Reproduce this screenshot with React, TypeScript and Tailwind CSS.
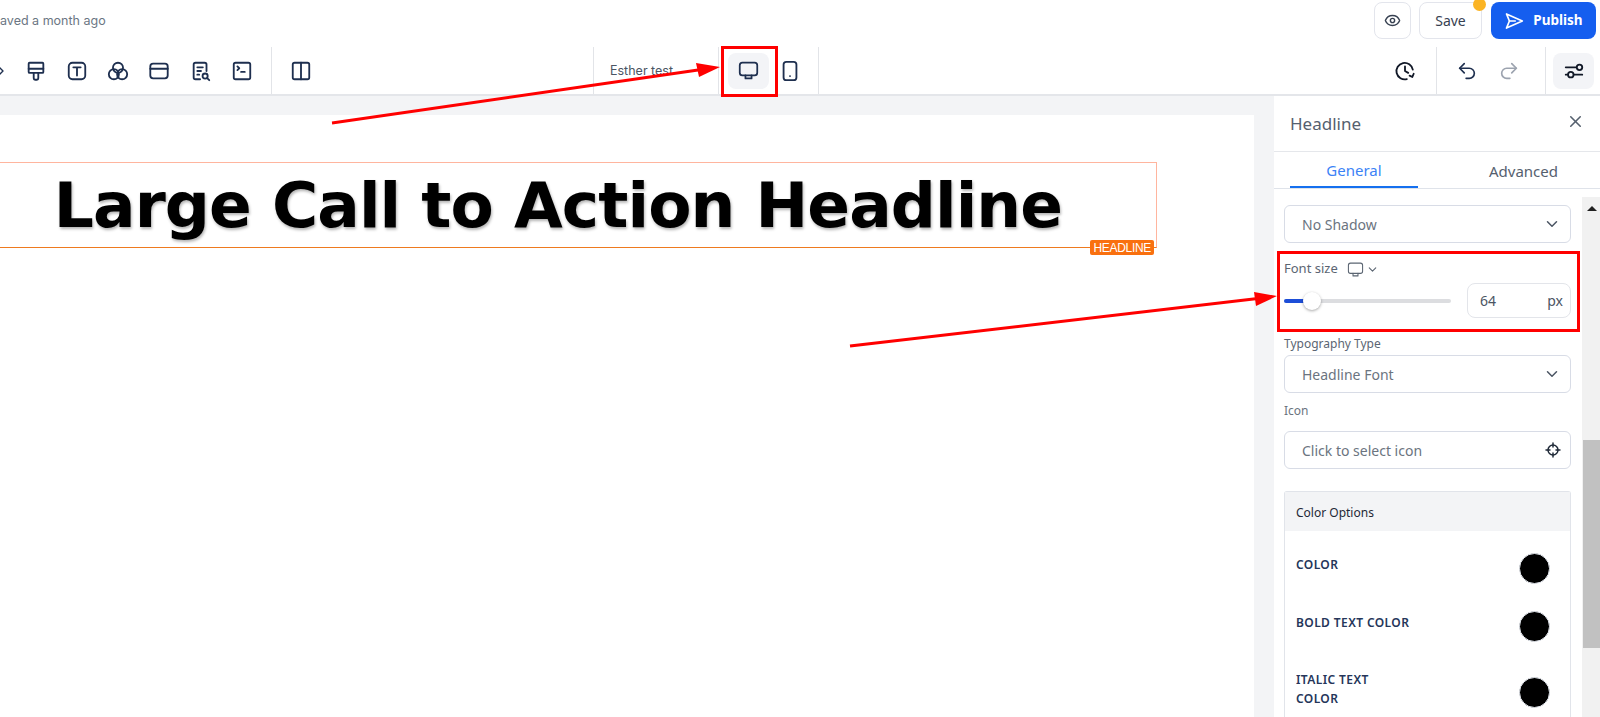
import React from "react";
import { Eye, Undo2, Redo2, X, ChevronDown, Columns2, SquareTerminal, ChevronRight } from "lucide-react";

const ink = "#1e2f4f";

function Svg({ children, size = 22, color = ink, sw = 2, className }: { children: React.ReactNode; size?: number; color?: string; sw?: number; className?: string }) {
  return (
    <svg className={className} width={size} height={size} viewBox="0 0 24 24" fill="none" stroke={color} strokeWidth={sw} strokeLinecap="round" strokeLinejoin="round">
      {children}
    </svg>
  );
}

const Brush = () => (
  <Svg>
    <path d="M5 3h14a1 1 0 0 1 1 1v9a1 1 0 0 1-1 1H5a1 1 0 0 1-1-1V4a1 1 0 0 1 1-1z" />
    <path d="M4 9.5h16" />
    <path d="M9.5 14v6a1.5 1.5 0 0 0 1.5 1.5h2a1.5 1.5 0 0 0 1.5-1.5v-6" />
  </Svg>
);
const TextBox = () => (
  <Svg>
    <rect x="3" y="3" width="18" height="18" rx="4" />
    <path d="M8 8h8M12 8v9" />
  </Svg>
);
const Circles = () => (
  <Svg>
    <circle cx="12" cy="8.5" r="5.5" />
    <circle cx="7.5" cy="15.5" r="5.5" />
    <circle cx="16.5" cy="15.5" r="5.5" />
  </Svg>
);
const WindowIcon = () => (
  <Svg>
    <rect x="2.5" y="4" width="19" height="16" rx="3" />
    <path d="M2.5 9.5h19" />
  </Svg>
);
const FileSearch = () => (
  <Svg>
    <path d="M11 21H6a2 2 0 0 1-2-2V5a2 2 0 0 1 2-2h10a2 2 0 0 1 2 2v7" />
    <path d="M8 8h6M8 12h4M8 16h2" />
    <circle cx="16.5" cy="17.5" r="2.8" />
    <path d="M19 20l2 2" />
  </Svg>
);
const HistoryIcon = () => (
  <Svg color="#111827">
    <path d="M20.5 10.5A9 9 0 1 0 14 20.8" />
    <path d="M12 7v5l3.5 2" />
    <path d="M21.5 15l-1.5 3.5-3-1.5" />
  </Svg>
);
const Sliders = () => (
  <Svg color="#111827">
    <path d="M3 8h11M3 16h2M12 16h9" />
    <circle cx="18" cy="8" r="3" />
    <circle cx="8.5" cy="16" r="3" />
  </Svg>
);
const Crosshair = () => (
  <Svg size={16} color="#1f2937" sw={2.2}>
    <circle cx="12" cy="12" r="7.5" />
    <path d="M12 1.5v6M12 16.5v6M1.5 12h6M16.5 12h6" />
  </Svg>
);
const MonitorIcon = ({ size = 21, color = ink, sw = 2, className }: { size?: number; color?: string; sw?: number; className?: string }) => (
  <Svg size={size} color={color} sw={sw} className={className}>
    <rect x="2" y="3" width="20" height="14.5" rx="3" />
    <path d="M8.5 17.5V21h7v-3.5" />
  </Svg>
);
const Phone = () => (
  <Svg className="ml-[10px]">
    <rect x="5" y="2" width="14" height="20" rx="3" />
    <path d="M12 17.5h.01" />
  </Svg>
);
const Plane = () => (
  <Svg size={20} color="white" sw={2}>
    <path d="M3 3.5L22 12 3 20.5 6.5 12z" />
    <path d="M6.5 12h7" />
  </Svg>
);

function Field({ text, icon }: { text: string; icon: React.ReactNode }) {
  return (
    <div className="flex h-[38px] items-center justify-between rounded-md border border-[#d8dce6] bg-white pl-[17px] pr-[9px] text-[14px] text-[#6b7480]">
      <span>{text}</span>
      {icon}
    </div>
  );
}

function ColorRow({ label, h, pt, circle }: { label: React.ReactNode; h: string; pt: string; circle: string }) {
  return (
    <div className={`flex shrink-0 items-start justify-between pl-[11px] pr-[20px] ${h} ${pt}`}>
      <div className="text-[12px] font-semibold leading-[19px] tracking-[0.4px] text-[#25365a]">{label}</div>
      <div className={`h-[31px] w-[31px] rounded-full border border-[#dfe3ea] bg-black ${circle}`} />
    </div>
  );
}

export default function App() {
  return (
    <div className="relative flex h-[717px] w-[1600px] flex-col overflow-hidden bg-white font-['Inter',sans-serif]">
      {/* top bar */}
      <div className="flex h-[47px] shrink-0 items-start justify-between pr-[4px] pt-[2px]">
        <div className="ml-[-8px] mt-[11px] text-[12.5px] leading-[16px] text-[#6b7683]">Saved a month ago</div>
        <div className="flex items-start">
          <div className="flex h-[37px] w-[37px] items-center justify-center rounded-lg border border-[#e3e5ec]">
            <Eye size={17} color="#374151" />
          </div>
          <div className="relative ml-[8px] flex h-[37px] w-[63px] items-center justify-center rounded-lg border border-[#e3e5ec] font-['Noto_Sans',sans-serif] text-[14px] text-[#374151]">
            Save
            <span className="absolute right-[-5px] top-[-5px] h-[13px] w-[13px] rounded-full bg-[#fbb424]" />
          </div>
          <div className="ml-[9px] flex h-[37px] w-[105px] items-center justify-center gap-[9px] rounded-lg bg-[#155eef] font-['Noto_Sans',sans-serif] text-[13.5px] font-bold text-white">
            <Plane />
            Publish
          </div>
        </div>
      </div>

      {/* toolbar */}
      <div className="flex h-[49px] shrink-0 items-stretch border-b-2 border-[#e4e6ea]">
        <div className="flex w-[272px] shrink-0 items-center border-r border-[#e2e4e8]">
          <ChevronRight size={16} color={ink} strokeWidth={2} className="ml-[-7px]" />
          <div className="ml-[15.5px] flex items-center gap-[19.3px]">
            <Brush />
            <TextBox />
            <Circles />
            <WindowIcon />
            <FileSearch />
            <SquareTerminal size={22} color={ink} strokeWidth={2} />
          </div>
        </div>
        <div className="flex w-[321px] shrink-0 items-center pl-[18px]">
          <Columns2 size={22} color={ink} strokeWidth={2} />
        </div>
        <div className="flex w-[126px] shrink-0 items-center border-x border-[#e2e4e8] pl-[16px] pt-[1px] text-[12.5px] text-[#4b5563]">Esther test</div>
        <div className="flex w-[100px] shrink-0 items-center border-r border-[#e2e4e8] pl-[9px]">
          <div className="flex h-[36px] w-[41px] items-center justify-center rounded-lg bg-[#f3f4f7]">
            <MonitorIcon />
          </div>
          <Phone />
        </div>
        <div className="flex flex-1 items-center justify-end border-r border-[#e2e4e8] pr-[20px]">
          <HistoryIcon />
        </div>
        <div className="flex w-[109px] shrink-0 items-center border-r border-[#e2e4e8] pl-[19px]">
          <Undo2 size={22} color={ink} strokeWidth={1.8} />
          <Redo2 size={22} color="#9ca3af" strokeWidth={1.8} className="ml-[20px]" />
        </div>
        <div className="flex w-[54px] shrink-0 items-center justify-center pl-[1px]">
          <div className="flex h-[36px] w-[41px] items-center justify-center rounded-lg bg-[#f3f4f7]">
            <Sliders />
          </div>
        </div>
      </div>

      {/* main */}
      <div className="flex min-h-0 flex-1 bg-[#f3f4f6]">
        <div className="mt-[19px] w-[1254px] shrink-0 bg-white pt-[47px]">
          <div className="relative ml-[-41px] flex h-[86px] w-[1198px] items-center justify-center border border-[#ffb59e] border-b-[#ee7a1f]">
            <span className="font-['DejaVu_Sans',sans-serif] text-[63px] font-bold leading-none tracking-[-0.9px] text-black [text-shadow:1px_2px_3px_rgba(0,0,0,0.3)]">
              Large Call to Action Headline
            </span>
            <span className="absolute bottom-[-8px] right-[2px] flex h-[15px] items-center rounded-[2px] bg-[#f9700f] px-[3px] font-['Liberation_Sans',sans-serif] text-[12px] tracking-[-0.3px] text-white">
              HEADLINE
            </span>
          </div>
        </div>

        <div className="ml-[20px] flex min-w-0 flex-1 flex-col bg-white font-['Noto_Sans',sans-serif]">
          <div className="flex h-[56px] shrink-0 items-center justify-between border-b border-[#e5e7eb] pl-[16px] pr-[15px]">
            <span className="text-[17px] text-[#55606e]">Headline</span>
            <X size={19} color="#55606e" className="mt-[-4px]" />
          </div>
          <div className="flex h-[37px] shrink-0 border-b border-[#dfe3ea] text-[15px]">
            <div className="ml-[16px] flex w-[128px] items-center justify-center border-b-2 border-[#1570ef] pt-[3px] text-[#3b82f6]">General</div>
            <div className="flex flex-1 items-center justify-end pr-[42px] pt-[2px] text-[#55606e]">Advanced</div>
          </div>
          <div className="flex min-h-0 flex-1 overflow-hidden pt-[8px]">
            <div className="min-w-0 flex-1 pl-[10px] pr-[11px] pt-[8px]">
              <Field text="No Shadow" icon={<ChevronDown size={18} color="#4b5563" />} />
              <div className="mt-[17px] flex h-[18px] items-center text-[13px] text-[#5b6572]">
                Font size
                <MonitorIcon size={17} color="#5b6572" sw={1.5} className="ml-[9px]" />
                <ChevronDown size={13} color="#5b6572" className="ml-[2px]" />
              </div>
              <div className="mt-[5px] flex h-[35px] items-center justify-between">
                <div className="relative h-[4px] w-[167px] rounded bg-[#dcdde0]">
                  <div className="h-full w-[20px] rounded-l bg-[#1d4ed8]" />
                  <div className="absolute left-[19px] top-[-7px] h-[18px] w-[18px] rounded-full bg-white shadow-[0_1px_3px_rgba(0,0,0,0.35)]" />
                </div>
                <div className="flex h-[35px] w-[104px] items-center justify-between rounded-lg border border-[#e3e5ea] pl-[12px] pr-[7px] text-[14px] text-[#4b5563]">
                  <span>64</span>
                  <span>px</span>
                </div>
              </div>
              <div className="mt-[17px] text-[12px] leading-[17px] text-[#5b6572]">Typography Type</div>
              <div className="mt-[3px]">
                <Field text="Headline Font" icon={<ChevronDown size={18} color="#4b5563" />} />
              </div>
              <div className="mt-[9px] text-[12px] leading-[17px] text-[#6b7480]">Icon</div>
              <div className="mt-[12px]">
                <Field text="Click to select icon" icon={<Crosshair />} />
              </div>
              <div className="mt-[22px] rounded-t-[3px] border border-b-0 border-[#e1e4ea]">
                <div className="flex h-[39px] items-center bg-[#f3f4f6] pl-[11px] pt-[3px] text-[12px] text-[#1f2937]">Color Options</div>
                <ColorRow label="COLOR" h="h-[57px]" pt="pt-[24px]" circle="mt-[-2px]" />
                <ColorRow label="BOLD TEXT COLOR" h="h-[58px]" pt="pt-[25px]" circle="mt-[-2px]" />
                <ColorRow
                  label={
                    <>
                      ITALIC TEXT
                      <br />
                      COLOR
                    </>
                  }
                  h="h-[120px]"
                  pt="pt-[24px]"
                  circle="mt-[7px]"
                />
              </div>
            </div>
            {/* scrollbar */}
            <div className="relative w-[18px] shrink-0 bg-[#f1f1f1]">
              <div className="absolute left-[5px] top-[9px] h-0 w-0 border-x-[5px] border-b-[5px] border-x-transparent border-b-[#202020]" />
              <div className="absolute left-[1px] right-0 top-[243px] h-[208px] bg-[#c1c1c1]" />
            </div>
          </div>
        </div>
      </div>

      {/* annotations */}
      <div className="pointer-events-none absolute left-[721px] top-[46px] h-[51px] w-[57px] border-[3px] border-[#ff0000]" />
      <div className="pointer-events-none absolute left-[1277px] top-[251px] h-[81px] w-[303px] border-[3px] border-[#ff0000]" />
      <svg className="pointer-events-none absolute left-0 top-0" width="1600" height="717">
        <line x1="332" y1="123" x2="705" y2="69" stroke="#ff0000" strokeWidth="3" />
        <polygon points="720,67 699,77 696,63" fill="#ff0000" />
        <line x1="850" y1="346" x2="1262" y2="298" stroke="#ff0000" strokeWidth="3" />
        <polygon points="1277,296 1256,306 1254,292" fill="#ff0000" />
      </svg>
    </div>
  );
}
